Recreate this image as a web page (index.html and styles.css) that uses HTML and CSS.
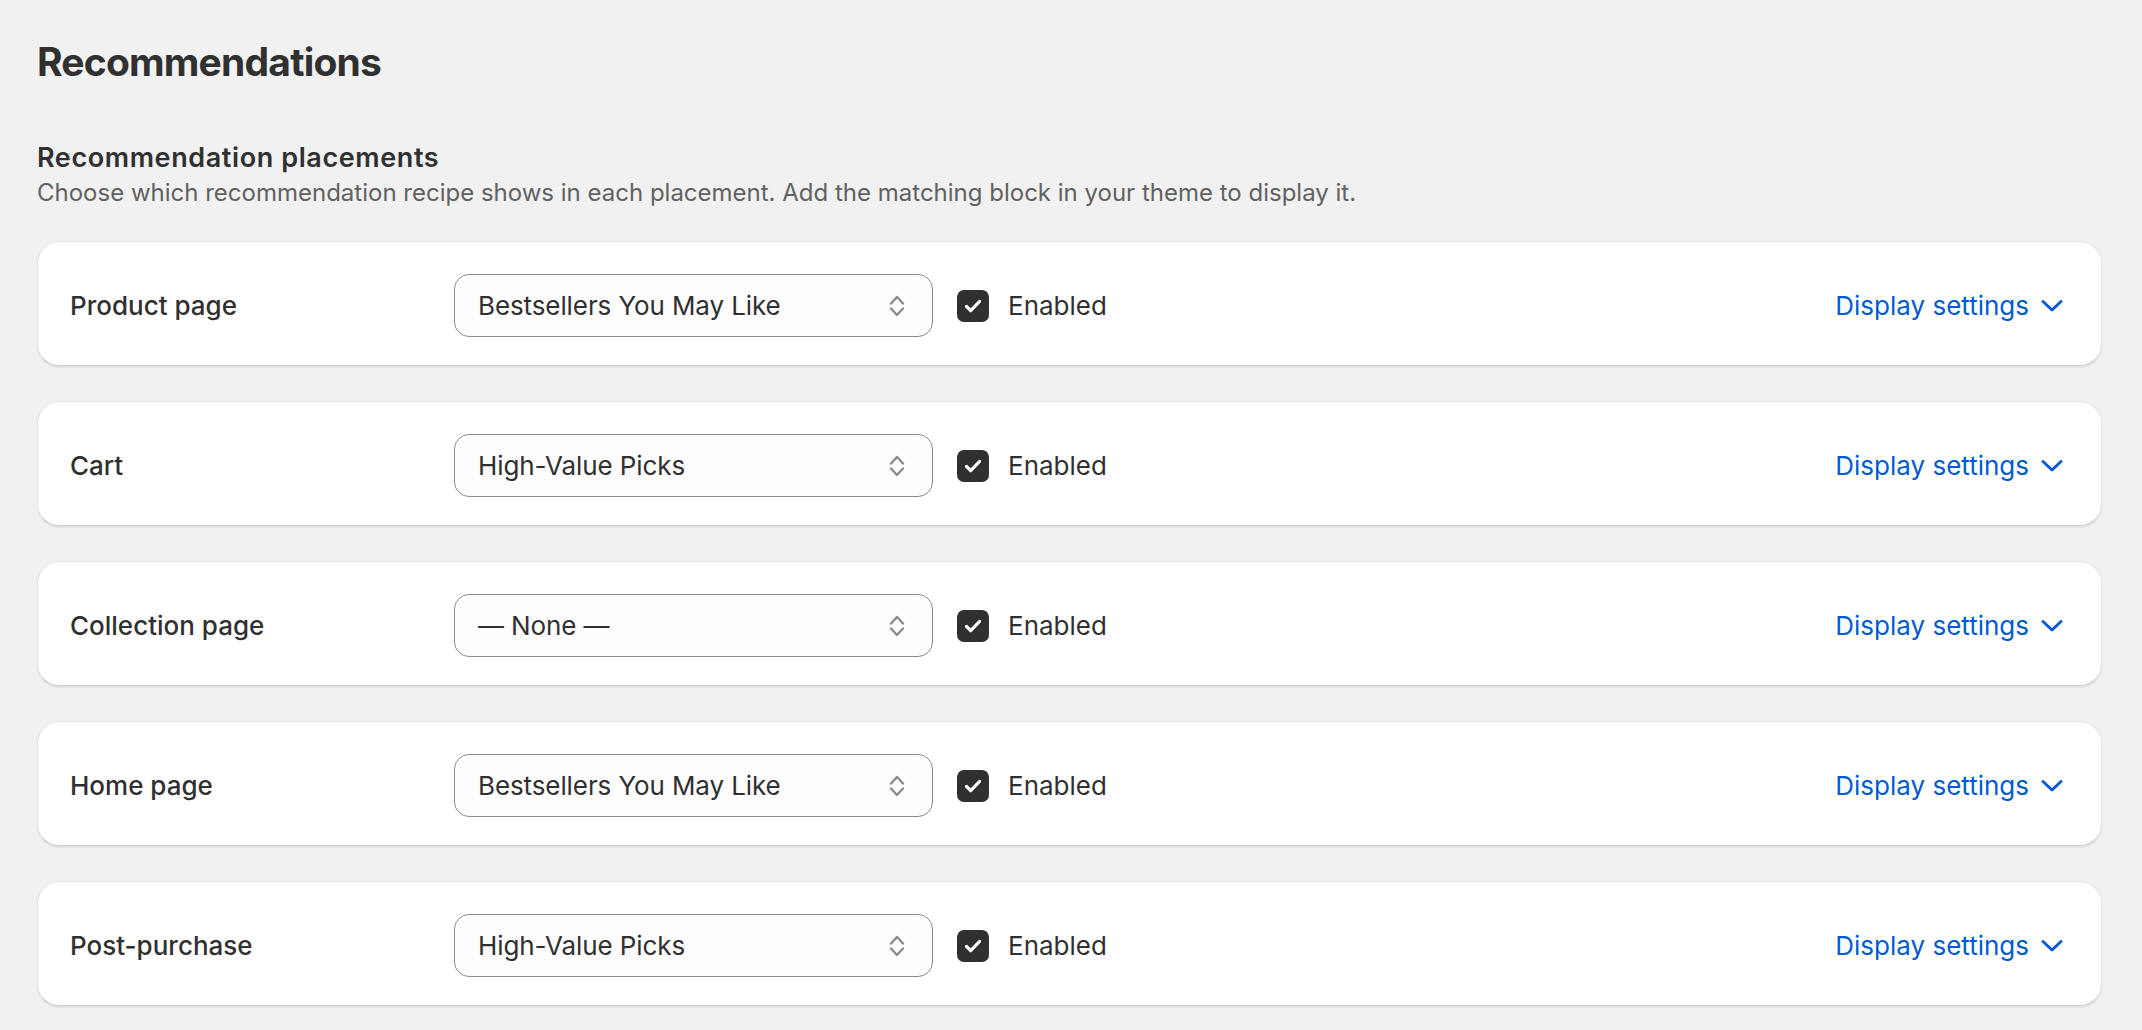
FILE: index.html
```html
<!DOCTYPE html>
<html lang="en">
<head>
  <meta charset="UTF-8">
  <meta name="viewport" content="width=device-width, initial-scale=1.0">
  <title>Recommendations</title>
  <link rel="stylesheet" href="styles.css">
</head>
<body>
  <div class="page">
    <h1 class="page-title">Recommendations</h1>

    <!-- placements -->
    <div class="section-head">
      <h2>Recommendation placements</h2>
      <p class="section-desc">Choose which recommendation recipe shows in each placement. Add the matching block in your theme to display it.</p>
    </div>

    <div class="placement-list">
      <div class="placement-card">
        <div class="placement-name">Product page</div>
        <div class="select">
          <span class="select-value">Bestsellers You May Like</span>
          <svg class="select-icon" viewBox="0 0 16 24" width="16" height="24"><path d="M2 9.5 8 3l6 6.5M2 14.5 8 21l6-6.5" fill="none" stroke="#8a8a8a" stroke-width="2.4" stroke-linecap="round" stroke-linejoin="round"/></svg>
        </div>
        <label class="check">
          <span class="check-box"><svg viewBox="0 0 32 32" width="32" height="32"><path d="M9.5 16.5l4.2 4.2 8.8-9.2" fill="none" stroke="#fff" stroke-width="3.2" stroke-linecap="round" stroke-linejoin="round"/></svg></span>
          <span>Enabled</span>
        </label>
        <a href="#" class="display-link">Display settings
          <svg viewBox="0 0 26 16" width="26" height="16"><path d="M4 3.5l9 8.5 9-8.5" fill="none" stroke="#005bd3" stroke-width="3" stroke-linecap="round" stroke-linejoin="round"/></svg>
        </a>
      </div>

      <div class="placement-card">
        <div class="placement-name">Cart</div>
        <div class="select">
          <span class="select-value">High-Value Picks</span>
          <svg class="select-icon" viewBox="0 0 16 24" width="16" height="24"><path d="M2 9.5 8 3l6 6.5M2 14.5 8 21l6-6.5" fill="none" stroke="#8a8a8a" stroke-width="2.4" stroke-linecap="round" stroke-linejoin="round"/></svg>
        </div>
        <label class="check">
          <span class="check-box"><svg viewBox="0 0 32 32" width="32" height="32"><path d="M9.5 16.5l4.2 4.2 8.8-9.2" fill="none" stroke="#fff" stroke-width="3.2" stroke-linecap="round" stroke-linejoin="round"/></svg></span>
          <span>Enabled</span>
        </label>
        <a href="#" class="display-link">Display settings
          <svg viewBox="0 0 26 16" width="26" height="16"><path d="M4 3.5l9 8.5 9-8.5" fill="none" stroke="#005bd3" stroke-width="3" stroke-linecap="round" stroke-linejoin="round"/></svg>
        </a>
      </div>

      <div class="placement-card">
        <div class="placement-name">Collection page</div>
        <div class="select">
          <span class="select-value">— None —</span>
          <svg class="select-icon" viewBox="0 0 16 24" width="16" height="24"><path d="M2 9.5 8 3l6 6.5M2 14.5 8 21l6-6.5" fill="none" stroke="#8a8a8a" stroke-width="2.4" stroke-linecap="round" stroke-linejoin="round"/></svg>
        </div>
        <label class="check">
          <span class="check-box"><svg viewBox="0 0 32 32" width="32" height="32"><path d="M9.5 16.5l4.2 4.2 8.8-9.2" fill="none" stroke="#fff" stroke-width="3.2" stroke-linecap="round" stroke-linejoin="round"/></svg></span>
          <span>Enabled</span>
        </label>
        <a href="#" class="display-link">Display settings
          <svg viewBox="0 0 26 16" width="26" height="16"><path d="M4 3.5l9 8.5 9-8.5" fill="none" stroke="#005bd3" stroke-width="3" stroke-linecap="round" stroke-linejoin="round"/></svg>
        </a>
      </div>

      <div class="placement-card">
        <div class="placement-name">Home page</div>
        <div class="select">
          <span class="select-value">Bestsellers You May Like</span>
          <svg class="select-icon" viewBox="0 0 16 24" width="16" height="24"><path d="M2 9.5 8 3l6 6.5M2 14.5 8 21l6-6.5" fill="none" stroke="#8a8a8a" stroke-width="2.4" stroke-linecap="round" stroke-linejoin="round"/></svg>
        </div>
        <label class="check">
          <span class="check-box"><svg viewBox="0 0 32 32" width="32" height="32"><path d="M9.5 16.5l4.2 4.2 8.8-9.2" fill="none" stroke="#fff" stroke-width="3.2" stroke-linecap="round" stroke-linejoin="round"/></svg></span>
          <span>Enabled</span>
        </label>
        <a href="#" class="display-link">Display settings
          <svg viewBox="0 0 26 16" width="26" height="16"><path d="M4 3.5l9 8.5 9-8.5" fill="none" stroke="#005bd3" stroke-width="3" stroke-linecap="round" stroke-linejoin="round"/></svg>
        </a>
      </div>

      <div class="placement-card">
        <div class="placement-name">Post-purchase</div>
        <div class="select">
          <span class="select-value">High-Value Picks</span>
          <svg class="select-icon" viewBox="0 0 16 24" width="16" height="24"><path d="M2 9.5 8 3l6 6.5M2 14.5 8 21l6-6.5" fill="none" stroke="#8a8a8a" stroke-width="2.4" stroke-linecap="round" stroke-linejoin="round"/></svg>
        </div>
        <label class="check">
          <span class="check-box"><svg viewBox="0 0 32 32" width="32" height="32"><path d="M9.5 16.5l4.2 4.2 8.8-9.2" fill="none" stroke="#fff" stroke-width="3.2" stroke-linecap="round" stroke-linejoin="round"/></svg></span>
          <span>Enabled</span>
        </label>
        <a href="#" class="display-link">Display settings
          <svg viewBox="0 0 26 16" width="26" height="16"><path d="M4 3.5l9 8.5 9-8.5" fill="none" stroke="#005bd3" stroke-width="3" stroke-linecap="round" stroke-linejoin="round"/></svg>
        </a>
      </div>
    </div>
  </div>
</body>
</html>
```

FILE: styles.css
```css
body {
  margin: 0;
  background: #f1f1f1;
  font-family: Inter, 'Noto Sans', sans-serif;
  color: #303030;
}

.page {
  padding: 38px 40px 40px 37px;
}

.page-title {
  margin: 0;
  font-size: 39px;
  line-height: 48px;
  font-weight: 700;
  letter-spacing: -0.8px;
}

.section-head {
  margin-top: 56px;
}

.section-head h2 {
  margin: 0;
  font-size: 27px;
  line-height: 32px;
  font-weight: 600;
  letter-spacing: 0.6px;
}

.section-desc {
  margin: 4px 0 0;
  font-size: 24px;
  line-height: 30px;
  color: #616161;
}

.placement-list {
  display: flex;
  flex-direction: column;
  gap: 35px;
  margin-top: 33px;
}

.placement-card {
  display: flex;
  align-items: center;
  height: 125px;
  box-sizing: border-box;
  padding: 4px 36px 0 32px;
  background: white;
  border: 1px solid #e3e3e3;
  border-bottom-color: #cccccc;
  border-radius: 22px;
  box-shadow: 0 2px 1px rgba(26, 26, 26, 0.07);
}

.placement-name {
  width: 384px;
  flex-shrink: 0;
  font-size: 26px;
  font-weight: 500;
}

.select {
  display: flex;
  align-items: center;
  justify-content: space-between;
  width: 479px;
  height: 63px;
  box-sizing: border-box;
  padding: 0 27px 0 23px;
  background: #fdfdfd;
  border: 1.5px solid #8a8a8a;
  border-radius: 15px;
  font-size: 26px;
  letter-spacing: -0.1px;
}

.check {
  display: flex;
  align-items: center;
  gap: 19px;
  margin-left: 24px;
  font-size: 26px;
}

.check-box {
  display: block;
  width: 32px;
  height: 32px;
  background: #303030;
  border-radius: 7px;
}

.check-box svg {
  display: block;
}

.display-link {
  display: flex;
  align-items: center;
  gap: 10px;
  margin-left: auto;
  color: #005bd3;
  text-decoration: none;
  font-size: 26px;
}

.display-link svg {
  display: block;
}
```
